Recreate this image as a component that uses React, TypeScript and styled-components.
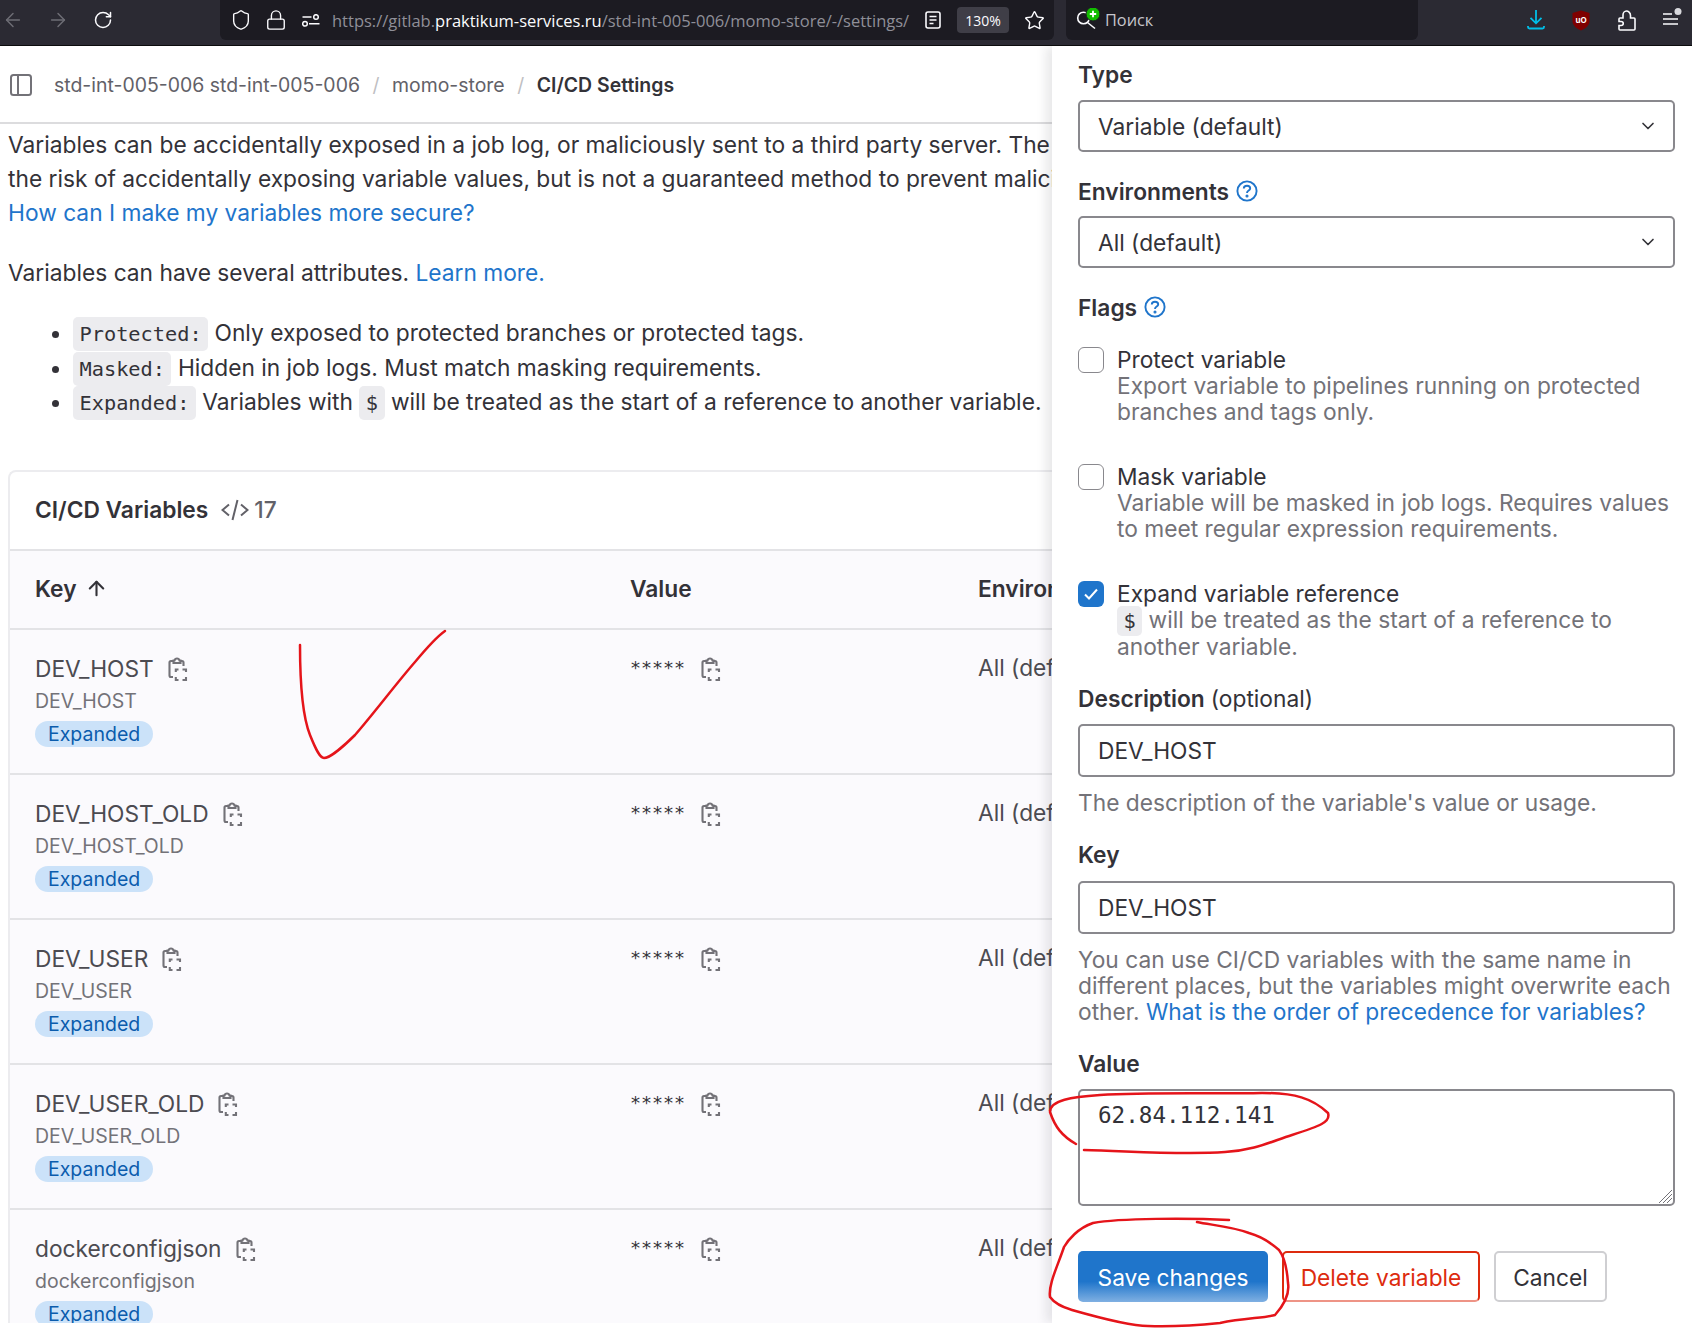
import React from 'react';
import styled, { createGlobalStyle } from 'styled-components';
import { ArrowLeft, ArrowRight, RotateCw, Shield, Lock, Star, ChevronDown, ArrowUp } from 'lucide-react';

type VariableRow = {
  name: string;
};

const ROWS: VariableRow[] = [
  { name: 'DEV_HOST' },
  { name: 'DEV_HOST_OLD' },
  { name: 'DEV_USER' },
  { name: 'DEV_USER_OLD' },
  { name: 'dockerconfigjson' }
];

const GlobalStyle = createGlobalStyle`
  html, body {
    margin: 0;
    padding: 0;
    background: #fff;
  }
  * {
    box-sizing: border-box;
  }
`;

const Screen = styled.div`
  position: relative;
  width: 1692px;
  height: 1329px;
  overflow: hidden;
  background: #fff;
  font-family: 'Inter', 'Noto Sans', sans-serif;
  font-size: 22.75px;
  color: #333238;
`;

const Toolbar = styled.div`
  display: flex;
  align-items: flex-start;
  height: 46px;
  background: #2b2a33;
  border-bottom: 1px solid #0c0c0d;
`;

const ToolSlot = styled.div<{ $w?: number; $dim?: boolean }>`
  display: flex;
  flex-shrink: 0;
  align-items: center;
  justify-content: center;
  width: ${(p) => p.$w || 35}px;
  height: 40px;
  color: ${(p) => (p.$dim ? '#6e6d75' : '#fbfbfe')};
`;

const NavGroup = styled.div`
  display: flex;
  margin-left: -10px;
  margin-right: 95px;
`;

const UrlBar = styled.div`
  display: flex;
  align-items: center;
  width: 834px;
  height: 40px;
  padding: 0 2px 0 3px;
  background: #1c1b22;
  border-radius: 0 0 6px 6px;
`;

const UrlText = styled.div`
  flex: 1;
  min-width: 0;
  margin-left: 4px;
  overflow: hidden;
  white-space: nowrap;
  font-family: 'Open Sans', sans-serif;
  font-size: 16.5px;
  color: #8f8f98;
`;

const UrlHost = styled.span`
  color: #fbfbfe;
`;

const ZoomPill = styled.div`
  display: flex;
  align-items: center;
  justify-content: center;
  width: 52px;
  height: 26px;
  margin: 0 7px 0 7px;
  border-radius: 4px;
  background: #3f3e47;
  font-family: 'Open Sans', sans-serif;
  font-size: 14px;
  color: #fbfbfe;
`;

const SearchBar = styled.div`
  display: flex;
  align-items: center;
  gap: 5px;
  width: 352px;
  height: 40px;
  margin-left: 12px;
  padding-left: 10px;
  background: #1c1b22;
  border-radius: 0 0 6px 6px;
  font-family: 'Open Sans', sans-serif;
  font-size: 16.3px;
  color: #c6c6cc;
`;

const ToolRight = styled.div`
  display: flex;
  margin-left: auto;
`;

const Main = styled.div`
  display: flex;
  height: 1277px;
  overflow: hidden;
`;

const LeftPane = styled.div`
  flex: 0 0 1052px;
  width: 1052px;
  overflow: hidden;
`;

const Breadcrumbs = styled.div`
  display: flex;
  align-items: center;
  height: 78px;
  padding: 2px 0 0 10px;
  border-bottom: 2px solid #dcdcde;
  font-size: 19.45px;
  color: #626168;
  white-space: nowrap;
`;

const Crumb = styled.span`
  margin-left: 22px;
`;

const Sep = styled.span`
  margin: 0 12.5px;
  color: #bfbfc3;
`;

const CrumbCurrent = styled.span`
  font-weight: 600;
  color: #333238;
`;

const Article = styled.div`
  padding: 4px 0 0 8px;
  line-height: 34px;
`;

const Para = styled.p`
  margin: 0 0 26px;
  white-space: nowrap;
`;

const Link = styled.a`
  color: #1f75cb;
  text-decoration: none;
`;

const Bullets = styled.ul`
  margin: 0 0 51px;
  padding-left: 65px;
  height: 103px;
  line-height: 34.5px;
  white-space: nowrap;

  & code {
    padding: 5px 6.5px;
    line-height: 1;
  }
`;

const Code = styled.code`
  padding: 3px 6.5px;
  background: #ececef;
  border-radius: 5px;
  font-family: 'DejaVu Sans Mono', monospace;
  font-size: 20.3px;
  color: #333238;
`;

const Card = styled.div`
  margin-left: 8px;
  width: 1300px;
  border: 2px solid #ececef;
  border-radius: 8px 0 0 0;
  border-right: 0;
  border-bottom: 0;
`;

const CardHead = styled.div`
  display: flex;
  align-items: center;
  height: 79px;
  padding: 0 0 2px 25px;
  border-bottom: 2px solid #e3e3e6;
`;

const CardTitle = styled.span`
  font-weight: 600;
`;

const CardCount = styled.span`
  display: flex;
  align-items: center;
  gap: 5px;
  margin-left: 13px;
  color: #626168;
  font-weight: 500;
`;

const TableRow = styled.div<{ $head?: boolean }>`
  display: grid;
  grid-template-columns: 595px 348px 1fr;
  align-items: ${(p) => (p.$head ? 'center' : 'start')};
  height: ${(p) => (p.$head ? 79 : 145)}px;
  padding: ${(p) => (p.$head ? 0 : 21)}px 0 ${(p) => (p.$head ? 2 : 0)}px 25px;
  background: #fbfafd;
  border-bottom: 2px solid #e3e3e6;
`;

const HeadCell = styled.div`
  display: flex;
  align-items: center;
  gap: 8px;
  font-weight: 600;
  white-space: nowrap;
`;

const NameLine = styled.div`
  display: flex;
  align-items: center;
  gap: 14px;
  height: 34px;
  color: #4c4b51;
`;

const SubName = styled.div`
  margin-top: 1px;
  height: 30px;
  line-height: 30px;
  font-size: 19.5px;
  color: #737278;
`;

const Chip = styled.span`
  display: inline-block;
  margin-top: 5px;
  height: 26px;
  padding: 0 13px;
  border-radius: 13px;
  background: #cbe2f9;
  font-size: 19.5px;
  line-height: 26px;
  color: #0b5cad;
`;

const ValueLine = styled.div`
  display: flex;
  align-items: center;
  gap: 16px;
  height: 34px;
  font-family: 'DejaVu Sans Mono', monospace;
  font-size: 18.3px;
`;

const Stars = styled.span`
  margin-bottom: 2px;
`;

const EnvCell = styled.div`
  height: 34px;
  line-height: 34px;
  color: #4c4b51;
  white-space: nowrap;
`;

const Drawer = styled.aside`
  flex: 0 0 640px;
  width: 640px;
  padding: 15px 17px 0 26px;
  background: #fff;
  box-shadow: -6px 0 10px rgba(31, 30, 36, 0.1);
  z-index: 1;
`;

const Field = styled.div<{ $after?: number }>`
  margin-bottom: ${(p) => p.$after || 25}px;
`;

const Label = styled.div<{ $gap?: number }>`
  display: flex;
  align-items: center;
  gap: 7px;
  height: 26px;
  margin-bottom: ${(p) => p.$gap || 13}px;
  font-weight: 600;
`;

const LabelNote = styled.span`
  margin-left: -1px;
  font-weight: 400;
`;

const SelectBox = styled.div`
  display: flex;
  align-items: center;
  justify-content: space-between;
  height: 52px;
  padding: 0 15px 0 18px;
  border: 2px solid #89888d;
  border-radius: 5px;
  color: #333238;
`;

const InputBox = styled.div`
  display: flex;
  align-items: center;
  height: 53px;
  padding: 0 18px;
  border: 2px solid #89888d;
  border-radius: 5px;
`;

const HelpText = styled.div`
  margin-top: 13px;
  line-height: 26px;
  color: #737278;
`;

const FlagRow = styled.div<{ $gap: number }>`
  display: flex;
  gap: 14px;
  margin-bottom: ${(p) => p.$gap}px;
`;

const Checkbox = styled.span<{ $on?: boolean }>`
  display: flex;
  flex-shrink: 0;
  align-items: center;
  justify-content: center;
  width: 26px;
  height: 26px;
  border: ${(p) => (p.$on ? '0' : '1.5px solid #89888d')};
  border-radius: 6px;
  background: ${(p) => (p.$on ? '#1f75cb' : '#fff')};
  color: #fff;
`;

const FlagBody = styled.div`
  margin-left: -1px;
  line-height: 26px;
`;

const FlagHelp = styled.div`
  color: #737278;
`;

const ValueBox = styled.div`
  position: relative;
  height: 117px;
  padding: 10px 18px;
  border: 2px solid #89888d;
  border-radius: 5px;
  font-family: 'DejaVu Sans Mono', monospace;
  font-size: 22.6px;
  line-height: 28px;
`;

const Grip = styled.svg`
  position: absolute;
  right: 0;
  bottom: 0;
  width: 15px;
  height: 15px;
  color: #737278;
`;

const Actions = styled.div`
  display: flex;
  gap: 14px;
  margin-top: 45px;
`;

const SaveButton = styled.button`
  width: 190px;
  height: 51px;
  padding: 1px 0 0;
  border: 0;
  border-radius: 5px;
  background: linear-gradient(#1f75cb 0%, #1f75cb 60%, #80b0e2 100%);
  color: #fff;
  font: inherit;
`;

const DeleteButton = styled.button`
  width: 198px;
  height: 51px;
  padding: 1px 0 0;
  border: 2px solid #dd2b0e;
  border-bottom-color: #ee9486;
  border-radius: 5px;
  background: #fff;
  color: #dd2b0e;
  font: inherit;
`;

const CancelButton = styled.button`
  width: 113px;
  height: 51px;
  padding: 1px 0 0;
  border: 2px solid #cfcfd2;
  border-radius: 5px;
  background: #fff;
  color: #333238;
  font: inherit;
`;

const Scribbles = styled.svg`
  position: absolute;
  top: 0;
  left: 0;
  z-index: 2;
  pointer-events: none;
`;

function CopyIcon() {
  return (
    <svg width="20" height="25" viewBox="0 0 20 25" fill="none" stroke="#737278" strokeWidth="2.1">
      <path d="M5 5H3Q1.5 5 1.5 6.5V19.5Q1.5 21 3 21H5" />
      <path d="M13 5H14Q15.5 5 15.5 6.5V10" />
      <path d="M5.5 7V4.5H6.5A2.6 2.8 0 0 1 11.5 4.5H12.5V7Z" />
      <path d="M7.8 16V13.5H10.5M14.5 13.5H18V16M18 21V24H14.5M10.5 24H7.8V21" />
    </svg>
  );
}

function HelpIcon() {
  return (
    <svg width="22" height="22" viewBox="0 0 22 22" fill="none" stroke="#1f75cb" strokeWidth="1.9">
      <circle cx="11" cy="11" r="9.6" />
      <path d="M7.8 8.6C7.8 6.8 9.2 5.8 11 5.8C12.8 5.8 14.2 6.9 14.2 8.5C14.2 10.6 11 10.6 11 13" />
      <circle cx="11" cy="16" r="0.6" fill="#1f75cb" />
    </svg>
  );
}

function PanelIcon() {
  return (
    <svg width="22" height="22" viewBox="0 0 22 22" fill="none" stroke="#737278" strokeWidth="2">
      <rect x="1" y="1" width="20" height="20" rx="2.5" />
      <path d="M8 1V21" />
    </svg>
  );
}

function PermissionsIcon() {
  return (
    <svg width="18" height="13" viewBox="0 0 18 13" fill="none" stroke="#fbfbfe" strokeWidth="1.5">
      <path d="M0.5 3H9.5M7 9.8H17.5" />
      <circle cx="14" cy="3" r="2.3" />
      <circle cx="3" cy="9.8" r="2.3" />
    </svg>
  );
}

function ReaderIcon() {
  return (
    <svg width="16" height="18" viewBox="0 0 16 18" fill="none" stroke="#fbfbfe" strokeWidth="1.6">
      <rect x="1" y="1" width="14" height="16" rx="2" />
      <path d="M4.5 5.5H11.5M4.5 9H11.5M4.5 12.5H8.5" />
    </svg>
  );
}

function SearchEngineIcon() {
  return (
    <svg width="24" height="24" viewBox="0 0 24 24" fill="none" stroke="#fbfbfe" strokeWidth="1.6">
      <circle cx="7.5" cy="10" r="5.8" />
      <path d="M11.5 14.5L19 20.5" />
      <circle cx="17" cy="6" r="7" fill="#12bc00" stroke="#1c1b22" strokeWidth="1" />
      <path d="M17 2.8V9.2M13.8 6H20.2" stroke="#fff" strokeWidth="1.8" />
    </svg>
  );
}

function DownloadIcon() {
  return (
    <svg width="18" height="22" viewBox="0 0 18 22" fill="none" stroke="#00bfe8" strokeWidth="1.8">
      <path d="M9 1V14M3.5 8.8L9 14.3L14.5 8.8" />
      <path d="M1 17V18Q1 19.5 2.5 19.5H15.5Q17 19.5 17 18V17" />
    </svg>
  );
}

function UblockIcon() {
  return (
    <svg width="18" height="21" viewBox="0 0 18 21">
      <path d="M9 0.5L17.5 3V11C17.5 15.5 13 19 9 20.5C5 19 0.5 15.5 0.5 11V3Z" fill="#7f0000" />
      <text x="9" y="12.5" fontSize="8" fontWeight="700" fontFamily="Inter, sans-serif" fill="#fff" textAnchor="middle">
        uO
      </text>
    </svg>
  );
}

function PuzzleIcon() {
  return (
    <svg width="18" height="21" viewBox="0 0 18 21" fill="none" stroke="#fbfbfe" strokeWidth="1.6">
      <path d="M2 20H16Q17 20 17 19V9Q17 8 16 8H12.5V5.5C12.5 2.5 10 1 8.5 1C6.5 1 5 3 5 5V8H2Q1 8 1 9V11.5H3C6 11.5 6 15.5 3 15.5H1V19Q1 20 2 20Z" />
    </svg>
  );
}

function MenuIcon() {
  return (
    <svg width="24" height="24" viewBox="0 0 24 24" fill="none" stroke="#fbfbfe" strokeWidth="1.6">
      <path d="M5 6H14M5 11H20M5 16H20" />
      <circle cx="20" cy="3.5" r="3.5" fill="#d9d9de" stroke="none" />
    </svg>
  );
}

function VariableItem({ name }: VariableRow) {
  return (
    <TableRow>
      <div>
        <NameLine>
          {name}
          <CopyIcon />
        </NameLine>
        <SubName>{name}</SubName>
        <Chip>Expanded</Chip>
      </div>
      <ValueLine>
        <Stars>*****</Stars>
        <CopyIcon />
      </ValueLine>
      <EnvCell>All (default)</EnvCell>
    </TableRow>
  );
}

function App() {
  return (
    <Screen>
      <GlobalStyle />
      <Toolbar>
        <NavGroup>
          <ToolSlot $w={45} $dim>
            <ArrowLeft size={22} strokeWidth={1.6} />
          </ToolSlot>
          <ToolSlot $w={45} $dim>
            <ArrowRight size={22} strokeWidth={1.6} />
          </ToolSlot>
          <ToolSlot $w={45}>
            <RotateCw size={20} strokeWidth={1.8} />
          </ToolSlot>
        </NavGroup>
        <UrlBar>
          <ToolSlot>
            <Shield size={22} strokeWidth={1.5} />
          </ToolSlot>
          <ToolSlot>
            <Lock size={22} strokeWidth={1.5} />
          </ToolSlot>
          <ToolSlot>
            <PermissionsIcon />
          </ToolSlot>
          <UrlText>
            https://gitlab.<UrlHost>praktikum-services.ru</UrlHost>/std-int-005-006/momo-store/-/settings/
          </UrlText>
          <ToolSlot>
            <ReaderIcon />
          </ToolSlot>
          <ZoomPill>130%</ZoomPill>
          <ToolSlot $w={36}>
            <Star size={21} strokeWidth={1.6} />
          </ToolSlot>
        </UrlBar>
        <SearchBar>
          <SearchEngineIcon />
          Поиск
        </SearchBar>
        <ToolRight>
          <ToolSlot $w={40}>
            <DownloadIcon />
          </ToolSlot>
          <ToolSlot $w={50}>
            <UblockIcon />
          </ToolSlot>
          <ToolSlot $w={42}>
            <PuzzleIcon />
          </ToolSlot>
          <ToolSlot $w={44}>
            <MenuIcon />
          </ToolSlot>
        </ToolRight>
      </Toolbar>
      <Main>
        <LeftPane>
          <Breadcrumbs>
            <PanelIcon />
            <Crumb>std-int-005-006 std-int-005-006</Crumb>
            <Sep>/</Sep>
            momo-store
            <Sep>/</Sep>
            <CrumbCurrent>CI/CD Settings</CrumbCurrent>
          </Breadcrumbs>
          <Article>
            <Para>
              Variables can be accidentally exposed in a job log, or maliciously sent to a third party server. The masked variable feature can help reduce
              <br />
              the risk of accidentally exposing variable values, but is not a guaranteed method to prevent malicious users from accessing variables.
              <br />
              <Link>How can I make my variables more secure?</Link>
            </Para>
            <Para>
              Variables can have several attributes. <Link>Learn more.</Link>
            </Para>
            <Bullets>
              <li>
                <Code>Protected:</Code> Only exposed to protected branches or protected tags.
              </li>
              <li>
                <Code>Masked:</Code> Hidden in job logs. Must match masking requirements.
              </li>
              <li>
                <Code>Expanded:</Code> Variables with <Code>$</Code> will be treated as the start of a reference to another variable.
              </li>
            </Bullets>
          </Article>
          <Card>
            <CardHead>
              <CardTitle>CI/CD Variables</CardTitle>
              <CardCount>
                <svg width="28" height="26" viewBox="0 0 28 26" fill="none" stroke="#626168" strokeWidth="2">
                  <path d="M8 7.5L1.5 13L8 18.5M20 7.5L26.5 13L20 18.5M16.5 3L11.5 23" />
                </svg>
                17
              </CardCount>
            </CardHead>
            <TableRow $head>
              <HeadCell>
                Key
                <ArrowUp size={23} strokeWidth={2.2} />
              </HeadCell>
              <HeadCell>Value</HeadCell>
              <HeadCell>Environments</HeadCell>
            </TableRow>
            {ROWS.map((row) => (
              <VariableItem key={row.name} name={row.name} />
            ))}
          </Card>
        </LeftPane>
        <Drawer>
          <Field $after={26}>
            <Label>Type</Label>
            <SelectBox>
              Variable (default)
              <ChevronDown size={20} color="#333238" />
            </SelectBox>
          </Field>
          <Field $after={26}>
            <Label $gap={12}>
              Environments
              <HelpIcon />
            </Label>
            <SelectBox>
              All (default)
              <ChevronDown size={20} color="#333238" />
            </SelectBox>
          </Field>
          <Field>
            <Label $gap={27}>
              Flags
              <HelpIcon />
            </Label>
            <FlagRow $gap={39}>
              <Checkbox />
              <FlagBody>
                Protect variable
                <FlagHelp>
                  Export variable to pipelines running on protected
                  <br />
                  branches and tags only.
                </FlagHelp>
              </FlagBody>
            </FlagRow>
            <FlagRow $gap={39}>
              <Checkbox />
              <FlagBody>
                Mask variable
                <FlagHelp>
                  Variable will be masked in job logs. Requires values
                  <br />
                  to meet regular expression requirements.
                </FlagHelp>
              </FlagBody>
            </FlagRow>
            <FlagRow $gap={0}>
              <Checkbox $on>
                <svg width="16" height="14" viewBox="0 0 16 14" fill="none" stroke="#fff" strokeWidth="2">
                  <path d="M2 7.5L6 11.5L14 2.5" />
                </svg>
              </Checkbox>
              <FlagBody>
                Expand variable reference
                <FlagHelp>
                  <Code>$</Code> will be treated as the start of a reference to
                  <br />
                  another variable.
                </FlagHelp>
              </FlagBody>
            </FlagRow>
          </Field>
          <Field>
            <Label>
              Description <LabelNote>(optional)</LabelNote>
            </Label>
            <InputBox>DEV_HOST</InputBox>
            <HelpText>The description of the variable's value or usage.</HelpText>
          </Field>
          <Field>
            <Label $gap={14}>Key</Label>
            <InputBox>DEV_HOST</InputBox>
            <HelpText>
              You can use CI/CD variables with the same name in
              <br />
              different places, but the variables might overwrite each
              <br />
              other. <Link>What is the order of precedence for variables?</Link>
            </HelpText>
          </Field>
          <Label>Value</Label>
          <ValueBox>
            62.84.112.141
            <Grip viewBox="0 0 15 15" fill="none" stroke="currentColor" strokeWidth="1">
              <path d="M14 1L1 14M14 5L5 14M14 9L9 14" />
            </Grip>
          </ValueBox>
          <Actions>
            <SaveButton>Save changes</SaveButton>
            <DeleteButton>Delete variable</DeleteButton>
            <CancelButton>Cancel</CancelButton>
          </Actions>
        </Drawer>
      </Main>
      <Scribbles width="1692" height="1329" viewBox="0 0 1692 1329" fill="none" stroke="#e5141a" strokeWidth="2.5" strokeLinecap="round">
        <path d="M300 645C300 680 302 715 310 735C316 750 320 758 324 758C330 758 345 745 355 735C375 712 395 685 415 662C425 650 435 638 445 631" />
        <path d="M1076 1144C1062 1136 1055 1127 1050 1112C1050 1100 1072 1097 1100 1095C1150 1092 1210 1094 1262 1093C1295 1093 1312 1098 1328 1113C1331 1122 1320 1126 1292 1135C1270 1142 1255 1150 1225 1152C1180 1155 1130 1151 1084 1150" />
        <path d="M1229 1220C1190 1218 1120 1218 1093 1223C1078 1228 1068 1240 1064 1247C1058 1265 1048 1285 1050 1297C1055 1304 1062 1307 1072 1310C1100 1318 1130 1326 1148 1326C1175 1327 1200 1325 1220 1323C1245 1318 1265 1318 1275 1315C1284 1305 1290 1295 1288 1283C1287 1268 1285 1258 1279 1250C1270 1242 1260 1236 1249 1233C1230 1226 1210 1225 1197 1222" />
      </Scribbles>
    </Screen>
  );
}

export default App;
